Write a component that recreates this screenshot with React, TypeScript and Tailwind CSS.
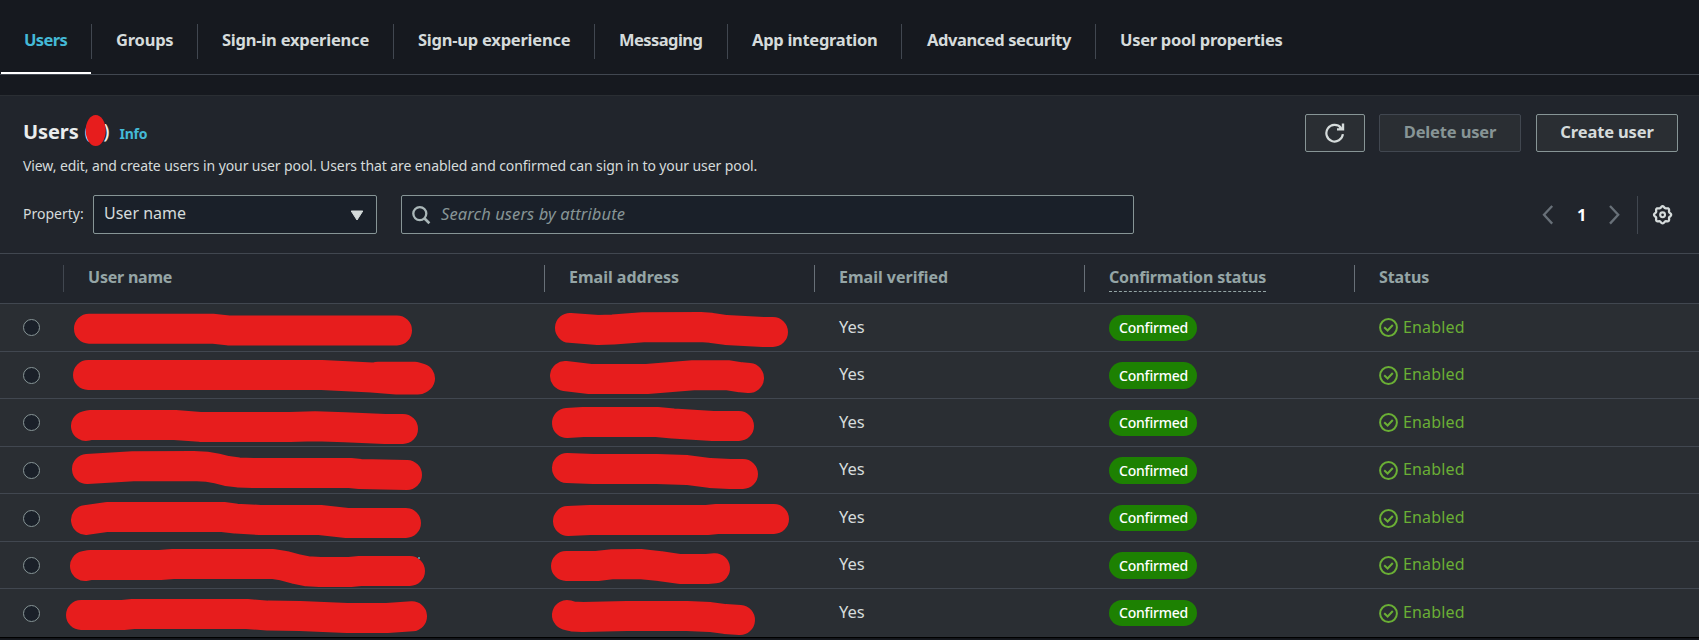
import React from "react";

const tabs = [
  { label: "Users", box: "w-[91px] pl-[24px]", text: "tracking-[-0.6px] text-[#44b9d6]" },
  { label: "Groups", box: "w-[106px] pl-[25px]", text: "tracking-[-0.22px]" },
  { label: "Sign-in experience", box: "w-[196px] pl-[25px]", text: "tracking-[-0.22px]" },
  { label: "Sign-up experience", box: "w-[201px] pl-[25px]", text: "tracking-[-0.23px]" },
  { label: "Messaging", box: "w-[133px] pl-[25px]", text: "tracking-[-0.55px]" },
  { label: "App integration", box: "w-[174px] pl-[25px]", text: "tracking-[-0.29px]" },
  { label: "Advanced security", box: "w-[194px] pl-[26px]", text: "tracking-[-0.42px]" },
  { label: "User pool properties", box: "w-[220px] pl-[25px]", text: "tracking-[-0.28px]" },
];

const columns = [
  { label: "", box: "w-[64px]", line: "border-[#414750]", text: "" },
  { label: "User name", box: "w-[481px]", line: "border-[#687078]", text: "tracking-[-0.22px]" },
  { label: "Email address", box: "w-[270px]", line: "border-[#687078]", text: "" },
  { label: "Email verified", box: "w-[270px]", line: "border-[#687078]", text: "" },
  {
    label: "Confirmation status",
    box: "w-[270px]",
    line: "border-[#687078]",
    text: "tracking-[-0.16px]",
    dashed: true,
  },
  { label: "Status", box: "w-[344px]", line: "border-transparent", text: "tracking-[-0.1px]" },
];

// Marker strokes share one coordinate space; each cell shows its own window of it.
const rows = [
  {
    top: 304,
    height: 48,
    name: "M89 328.7H212L228 330.4H397",
    email: "M570 327.9L598 330L613 329.5L643 327.2L700 327L711 327.8L726 330L763 332H773",
  },
  {
    top: 352,
    height: 47,
    name: "M88 375H322L372 377.6L397 379.6H418L420 378.3L415 376.8H378",
    email: "M565 376L590 379H647L693 375.2H727L741 377.3L749 378",
  },
  {
    top: 399,
    height: 48,
    name: "M86 426L90 425H175L200 426.9H290L315 426.2L345 427.3L385 428.9H403",
    email: "M567 423L583 422H657L673 423.5L713 426H739",
  },
  {
    top: 447,
    height: 47,
    name: "M87 469L133 466.3L193 466L207 466.8L217 468.5L227 471L238 472.4L253 473H350L360 474L407 475",
    email: "M567 468L593 469H657L687 470L710 473L730 474H743",
  },
  {
    top: 494,
    height: 48,
    low: true,
    name: "M86 520L107 517H223L236 518.6L260 520H320L347 523H406",
    email: "M568 521L590 520H707L717 519H774",
  },
  {
    top: 542,
    height: 47,
    name: "M85 566L90 565H160L173 564H273L284 565.7L296 569L307 571.2L320 572H350L360 571H410",
    email: "M566 566H597L613 564.2L640 564L660 566.2L680 569H707L715 568.3",
    residue: true,
  },
  {
    top: 589,
    height: 48,
    low: true,
    name: "M81 615H123L133 614H247L268 615.6L300 616L347 618H387L412 616.3",
    email: "M567 615L572 616.4L583 617L627 616H687L710 617L725 619L740 620",
  },
];

const gearPath =
  Array.from({ length: 97 }, (_, i) => {
    const a = (i / 96) * Math.PI * 2;
    const r = 7.8 + 0.75 * Math.cos(8 * a);
    return `${i === 0 ? "M" : "L"}${(10 + r * Math.cos(a)).toFixed(2)} ${(10 + r * Math.sin(a)).toFixed(2)}`;
  }).join("") + "Z";

function Scribble({ d, x, y, width, height }: { d: string; x: number; y: number; width: number; height: number }) {
  return (
    <svg
      className="block shrink-0 overflow-visible"
      width={width}
      height={height}
      viewBox={`${x} ${y} ${width} ${height}`}
      fill="none"
    >
      <path d={d} stroke="#e71d1d" strokeWidth="30" strokeLinecap="round" strokeLinejoin="round" />
    </svg>
  );
}

function TabBar() {
  return (
    <nav className="flex h-[75px] items-start border-b border-[#414750]">
      {tabs.map((tab, i) => (
        <div key={tab.label} className={`relative flex h-[74px] shrink-0 items-start pt-6 ${tab.box}`}>
          <span className={`whitespace-nowrap text-[16.5px] font-bold leading-[31px] ${tab.text}`}>{tab.label}</span>
          {i < tabs.length - 1 && <span className="absolute -right-px top-6 h-[35px] w-px bg-[#414750]" />}
          {i === 0 && <span className="absolute bottom-0 left-px right-0 h-[2px] bg-white" />}
        </div>
      ))}
    </nav>
  );
}

function PanelHeader() {
  return (
    <div className="flex h-[82px] justify-between pl-[23px] pr-[21px] pt-[18px]">
      <div>
        <div className="flex h-[39px] items-start">
          <h2 className="text-[20px] font-bold leading-[35px] tracking-[-0.1px] text-[#eaeded]">Users</h2>
          <span className="relative ml-[6px] flex w-[25px] justify-between text-[20px] font-medium leading-[33px] text-[#eaeded]">
            <span>(</span>
            <span>)</span>
            <svg className="absolute left-0 top-0" width="21" height="32" viewBox="0 0 21 32">
              <ellipse cx="10.7" cy="16.5" rx="10" ry="15.5" fill="#e71d1d" />
            </svg>
          </span>
          <a className="ml-[10px] text-[14px] font-bold leading-[40px] tracking-[-0.3px] text-[#44b9d6]">Info</a>
        </div>
        <p className="whitespace-nowrap text-[14px] leading-[25px] tracking-[-0.093px]">
          View, edit, and create users in your user pool. Users that are enabled and confirmed can sign in to your user
          pool.
        </p>
      </div>
      <div className="flex h-[38px] text-[16.5px] font-bold leading-[33px]">
        <button className="flex w-[60px] items-center justify-center rounded-[2px] border border-[#879596] bg-[#2a2e33]">
          <svg width="20" height="20" viewBox="0 0 20 20" fill="none" stroke="#d5dbdb">
            <path d="M17.9 11.2A8.3 8.3 0 1 1 15.9 4.7" strokeWidth="2.2" />
            <path d="M18 .4V6.4H12" strokeWidth="2.4" />
            <path d="M14.5 3.5L17.5 4.5V6H14Z" fill="#d5dbdb" stroke="none" />
          </svg>
        </button>
        <button className="ml-[14px] flex w-[142px] justify-center rounded-[2px] border border-[#414750] bg-[#2a2e33] tracking-[-0.15px] text-[#879596]">
          Delete user
        </button>
        <button className="ml-[15px] flex w-[142px] justify-center rounded-[2px] border border-[#879596] bg-[#2a2e33] tracking-[-0.15px]">
          Create user
        </button>
      </div>
    </div>
  );
}

function Filters() {
  return (
    <div className="mt-[17px] flex h-[39px] items-stretch pl-[23px] text-[14px]">
      <span className="w-[70px] leading-[37px]">Property:</span>
      <div className="flex w-[284px] justify-between rounded-[2px] border border-[#879596] bg-[#1a2029] pl-[10px] pr-[12px]">
        <span className="text-[16px] leading-[34px]">User name</span>
        <svg className="mt-[14px]" width="14" height="11" viewBox="0 0 14 11">
          <path d="M1.2 1H12.8L7 10Z" fill="#d5dbdb" stroke="#d5dbdb" strokeLinejoin="round" />
        </svg>
      </div>
      <div className="ml-6 flex w-[733px] rounded-[2px] border border-[#879596] bg-[#1a2029] pl-[9px]">
        <svg className="mt-[9px]" width="20" height="20" viewBox="0 0 20 20" fill="none" stroke="#aab7b8">
          <circle cx="8.8" cy="8.6" r="6.5" strokeWidth="2.3" />
          <path d="M13.3 13.3L18.4 18.3" strokeWidth="2.6" />
        </svg>
        <span className="ml-[10px] text-[16.5px] italic leading-[36px] tracking-[0.1px] text-[#879596]">
          Search users by attribute
        </span>
      </div>
      <div className="ml-[408px] flex items-center">
        <svg width="12" height="20" viewBox="0 0 12 20" fill="none" stroke="#687078" strokeWidth="2.3">
          <path d="M10.2 1L2 9.8L10.2 18.6" />
        </svg>
        <span className="ml-[23px] w-[10px] text-[16.5px] font-bold leading-[37px] text-white">1</span>
        <svg className="ml-[22px]" width="12" height="20" viewBox="0 0 12 20" fill="none" stroke="#687078" strokeWidth="2.3">
          <path d="M1 1L9.2 9.8L1 18.6" />
        </svg>
        <span className="ml-4 h-[38px] w-px bg-[#414750]" />
        <svg className="ml-[14px]" width="21" height="20" viewBox="-0.6 0.2 21 20" fill="none" stroke="#d5dbdb">
          <path d={gearPath} strokeWidth="2.3" />
          <circle cx="10" cy="10" r="2.4" strokeWidth="2.1" />
        </svg>
      </div>
    </div>
  );
}

function UsersTable() {
  return (
    <div className="mt-[19px]">
      <div className="flex h-[51px] items-start border-y border-[#414750] pt-[11px] text-[16px] font-bold text-[#95a5a6]">
        {columns.map((col, i) => (
          <div key={i} className={`flex h-[27px] shrink-0 border-r ${i ? "pl-6" : ""} ${col.box} ${col.line}`}>
            <span
              className={`h-[27px] whitespace-nowrap leading-[25px] ${col.text} ${
                col.dashed ? "border-b border-dashed border-[#95a5a6]" : ""
              }`}
            >
              {col.label}
            </span>
          </div>
        ))}
      </div>
      {rows.map((row, i) => {
        const short = row.height === 47;
        return (
          <div
            key={row.top}
            className={`flex items-start bg-[#2a2e33] ${short ? "h-[47px]" : "h-[48px]"} ${
              i < rows.length - 1 ? "border-b border-[#414750]" : ""
            }`}
          >
            <div className={`w-[64px] shrink-0 pl-[23px] ${row.low ? "pt-[16px]" : "pt-[15px]"}`}>
              <div className="h-[17px] w-[17px] rounded-full border border-[#879596] bg-[#1a2029]" />
            </div>
            <div className="relative shrink-0">
              <Scribble d={row.name} x={64} y={row.top} width={481} height={46} />
              {row.residue && <span className="absolute left-[354px] top-[15px] h-[2px] w-[2px] bg-[#4f8f98]" />}
            </div>
            <Scribble d={row.email} x={545} y={row.top} width={270} height={46} />
            <span className={`w-[270px] shrink-0 pl-6 text-[16.5px] ${short ? "leading-[44px]" : "leading-[46px]"}`}>
              Yes
            </span>
            <div className={`w-[270px] shrink-0 pl-6 ${short ? "pt-[10px]" : "pt-[11px]"}`}>
              <span
                className={`block w-[88px] rounded-full bg-[#1d8102] pl-[10px] text-[14px] font-medium tracking-[-0.2px] text-white ${
                  short ? "h-[27px] leading-[27px]" : "h-[26px] leading-[26px]"
                }`}
              >
                Confirmed
              </span>
            </div>
            <div className="flex pl-6 text-[#6aaf35]">
              <svg
                className={row.low ? "mt-[15px]" : "mt-[14px]"}
                width="19"
                height="19"
                viewBox="0 0 19 19"
                fill="none"
                stroke="#6aaf35"
                strokeWidth="2"
              >
                <circle cx="9.5" cy="9.5" r="8.4" />
                <path d="M5.2 9.3L8.6 12.5L13.8 7" />
              </svg>
              <span
                className={`ml-[5px] text-[16px] tracking-[0.15px] ${short ? "leading-[44px]" : "leading-[46px]"}`}
              >
                Enabled
              </span>
            </div>
          </div>
        );
      })}
    </div>
  );
}

export default function App() {
  return (
    <div className="h-[640px] w-[1699px] overflow-hidden bg-[#16191f] font-['Noto_Sans','Open_Sans',sans-serif] text-[#d5dbdb]">
      <TabBar />
      <main className="mt-5 h-[542px] border-t border-[#2a2e33] bg-[#21252c] shadow-[0_1px_1px_#000]">
        <PanelHeader />
        <Filters />
        <UsersTable />
      </main>
    </div>
  );
}
